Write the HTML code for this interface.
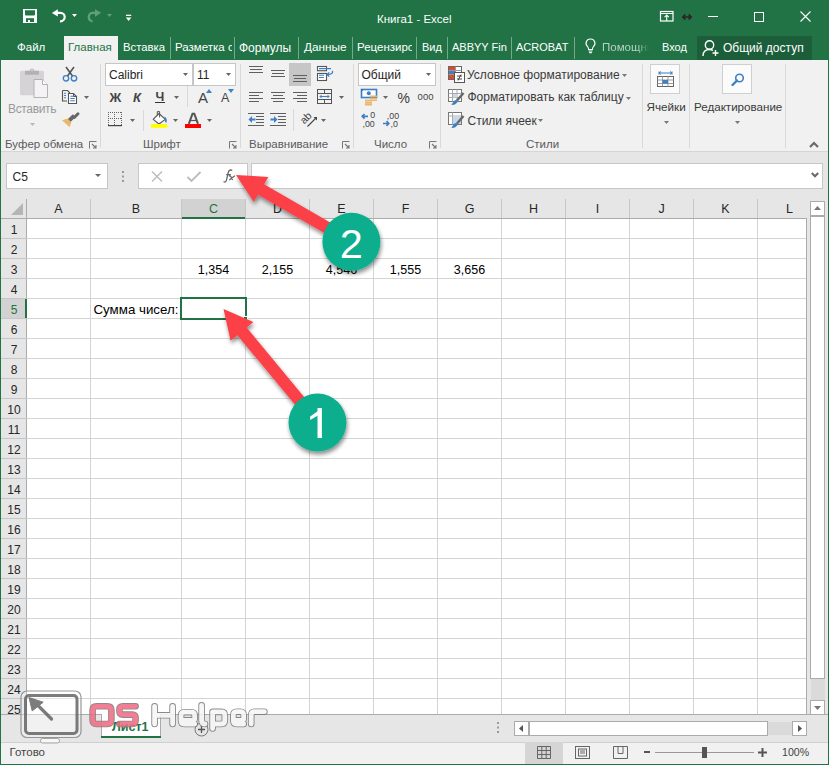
<!DOCTYPE html>
<html><head><meta charset="utf-8"><style>
*{margin:0;padding:0;box-sizing:border-box}
html,body{width:829px;height:765px;overflow:hidden;background:#fff;font-family:"Liberation Sans",sans-serif}
body{position:relative}
.a{position:absolute}
.t{position:absolute;white-space:nowrap;line-height:1}
svg{position:absolute;overflow:visible}
</style></head><body>
<div class="a" style="left:0px;top:0px;width:829px;height:60px;background:#217346;"></div>
<div class="t" style="left:377px;top:14.27px;font-size:11.5px;color:#fff;">Книга1 - Excel</div>
<svg style="left:22px;top:8px" width="16" height="16" viewBox="0 0 16 16"><rect x="1" y="1" width="14" height="14" fill="#fff"/><path d="M3 2.2H13V6.6L12.2 7.6H3.8L3 6.6Z" fill="#217346"/><rect x="4" y="10.2" width="8" height="3.8" fill="#217346"/><rect x="6" y="12" width="2" height="2" fill="#fff"/></svg>
<svg style="left:48px;top:6px" width="20" height="18" viewBox="0 0 20 18"><path d="M3.9 6.9L9.8 3.2V10.5Z" fill="#fff"/><path d="M9 6.9H12.5A4.2 4.2 0 0 1 12.5 15.3H12" fill="none" stroke="#fff" stroke-width="2.2"/></svg>
<svg style="left:72px;top:14px" width="5" height="3" viewBox="0 0 5 3"><path d="M0 0H5L2.5 3Z" fill="#fff"/></svg>
<svg style="left:84px;top:6px" width="20" height="18" viewBox="0 0 20 18"><path d="M17.2 6.8L11 3.2V10.7Z" fill="#5f9f7b"/><path d="M12 6.8H8A4.4 4.4 0 0 0 8 15.3H8.5" fill="none" stroke="#5f9f7b" stroke-width="2.2"/></svg>
<svg style="left:107px;top:14px" width="5" height="3" viewBox="0 0 5 3"><path d="M0 0H5L2.5 3Z" fill="#5f9f7b"/></svg>
<svg style="left:125px;top:14px" width="7" height="8" viewBox="0 0 7 8"><rect x="1" y="0.7" width="5.2" height="1.3" fill="#fff"/><path d="M0.8 3.4H6.4L3.6 7Z" fill="#fff"/></svg>
<svg style="left:659px;top:10px" width="15" height="12" viewBox="0 0 15 12"><rect x="1.5" y="1.5" width="12.5" height="9.5" fill="none" stroke="#fff" stroke-width="1.2"/><path d="M1.5 3.5H14" stroke="#fff" stroke-width="1"/><path d="M7.7 11V5M5.6 7.2L7.7 5.1L9.8 7.2" fill="none" stroke="#fff" stroke-width="1.1"/></svg>
<svg style="left:681px;top:13px" width="12" height="8" viewBox="0 0 12 8"><path d="M2 4H10" stroke="#2a2a2a" stroke-width="1.6"/><path d="M4 1L1 4L4 7ZM8 1L11 4L8 7Z" fill="#2a2a2a" stroke="#2a2a2a" stroke-width="1"/></svg>
<div class="a" style="left:708px;top:16px;width:10px;height:1px;background:#fff;"></div>
<div class="a" style="left:754px;top:12px;width:10px;height:10px;background:transparent;border:1px solid #fff"></div>
<svg style="left:800px;top:11px" width="11" height="11" viewBox="0 0 11 11"><path d="M0.5 0.5L10.5 10.5M10.5 0.5L0.5 10.5" stroke="#fff" stroke-width="1.1"/></svg>
<div class="a" style="left:64px;top:36px;width:54px;height:24px;background:#f1f1f1;"></div>
<div class="t" style="left:68px;top:41.97px;font-size:11.5px;color:#217346;">Главная</div>
<div class="t" style="left:17px;top:41.97px;font-size:11.5px;color:#fff;">Файл</div>
<div class="t" style="left:123px;top:42.13px;font-size:11.3px;color:#fff;">Вставка</div>
<div class="t" style="left:175px;top:41.97px;font-size:11.5px;color:#fff;width:57px;overflow:hidden">Разметка страницы</div>
<div class="t" style="left:239px;top:41.54px;font-size:12px;color:#fff;">Формулы</div>
<div class="t" style="left:304px;top:41.71px;font-size:11.8px;color:#fff;">Данные</div>
<div class="t" style="left:357px;top:41.97px;font-size:11.5px;color:#fff;width:55px;overflow:hidden">Рецензирование</div>
<div class="t" style="left:422px;top:42.39px;font-size:11px;color:#fff;">Вид</div>
<div class="t" style="left:452px;top:42.39px;font-size:11px;color:#fff;width:55px;overflow:hidden">ABBYY FineReader</div>
<div class="t" style="left:516px;top:42.39px;font-size:11px;color:#fff;">ACROBAT</div>
<div class="a" style="left:170px;top:37px;width:1px;height:22px;background:#78a88c;"></div>
<div class="a" style="left:234px;top:37px;width:1px;height:22px;background:#78a88c;"></div>
<div class="a" style="left:298px;top:37px;width:1px;height:22px;background:#78a88c;"></div>
<div class="a" style="left:352px;top:37px;width:1px;height:22px;background:#78a88c;"></div>
<div class="a" style="left:416px;top:37px;width:1px;height:22px;background:#78a88c;"></div>
<div class="a" style="left:447px;top:37px;width:1px;height:22px;background:#78a88c;"></div>
<div class="a" style="left:511px;top:37px;width:1px;height:22px;background:#78a88c;"></div>
<div class="a" style="left:574px;top:37px;width:1px;height:22px;background:#78a88c;"></div>
<svg style="left:585px;top:38px" width="11" height="17" viewBox="0 0 11 17"><path d="M5.5 1A4.3 4.3 0 0 0 2.6 8.6C3.4 9.5 3.6 10.5 3.6 11.5H7.4C7.4 10.5 7.6 9.5 8.4 8.6A4.3 4.3 0 0 0 5.5 1Z" fill="none" stroke="#fff" stroke-width="1.1"/><path d="M3.6 13H7.4M4.2 14.6H6.8" stroke="#fff" stroke-width="1.1"/></svg>
<div class="t" style="left:602px;top:41.97px;font-size:11.5px;color:#b5d3c2;width:47px;overflow:hidden;-webkit-mask-image:linear-gradient(90deg,#000 75%,transparent 100%)">Помощник</div>
<div class="t" style="left:662px;top:42.39px;font-size:11px;color:#fff;">Вход</div>
<div class="a" style="left:697px;top:36px;width:115px;height:24px;background:#1c5e3a;"></div>
<svg style="left:702px;top:39px" width="18" height="18" viewBox="0 0 18 18"><circle cx="7.5" cy="6" r="4.2" fill="none" stroke="#fff" stroke-width="1.4"/><path d="M1 17C1 12.5 3.5 10.5 7.5 10.5C9 10.5 10 10.8 11 11.3" fill="none" stroke="#fff" stroke-width="1.4"/><path d="M13.5 11V17M10.5 14H16.5" stroke="#fff" stroke-width="1.4"/></svg>
<div class="t" style="left:723px;top:41.54px;font-size:12px;color:#fff;">Общий доступ</div>
<div class="a" style="left:1px;top:60px;width:827px;height:91px;background:#f1f1f1;"></div>
<div class="a" style="left:1px;top:151px;width:827px;height:1px;background:#d5d5d5;"></div>
<div class="a" style="left:100px;top:64px;width:1px;height:84px;background:#d9d9d9;"></div>
<div class="a" style="left:240px;top:64px;width:1px;height:84px;background:#d9d9d9;"></div>
<div class="a" style="left:353px;top:64px;width:1px;height:84px;background:#d9d9d9;"></div>
<div class="a" style="left:440px;top:64px;width:1px;height:84px;background:#d9d9d9;"></div>
<div class="a" style="left:642px;top:64px;width:1px;height:84px;background:#d9d9d9;"></div>
<div class="a" style="left:689px;top:64px;width:1px;height:84px;background:#d9d9d9;"></div>
<div class="a" style="left:785px;top:64px;width:1px;height:84px;background:#d9d9d9;"></div>
<div class="t" style="left:5px;top:139.07px;font-size:11.5px;color:#5b5b5b;">Буфер обмена</div>
<div class="t" style="left:143px;top:139.07px;font-size:11.5px;color:#5b5b5b;">Шрифт</div>
<div class="t" style="left:249px;top:139.07px;font-size:11.5px;color:#5b5b5b;">Выравнивание</div>
<div class="t" style="left:374px;top:138.87px;font-size:11.5px;color:#5b5b5b;">Число</div>
<div class="t" style="left:526px;top:138.87px;font-size:11.5px;color:#5b5b5b;">Стили</div>
<svg style="left:89px;top:141px" width="8" height="8" viewBox="0 0 8 8"><path d="M0.5 7.5V0.5H7.5" fill="none" stroke="#777" stroke-width="1"/><path d="M3 3L7 7M4 7H7V4" fill="none" stroke="#777" stroke-width="1.1"/></svg>
<svg style="left:229px;top:141px" width="8" height="8" viewBox="0 0 8 8"><path d="M0.5 7.5V0.5H7.5" fill="none" stroke="#777" stroke-width="1"/><path d="M3 3L7 7M4 7H7V4" fill="none" stroke="#777" stroke-width="1.1"/></svg>
<svg style="left:342px;top:141px" width="8" height="8" viewBox="0 0 8 8"><path d="M0.5 7.5V0.5H7.5" fill="none" stroke="#777" stroke-width="1"/><path d="M3 3L7 7M4 7H7V4" fill="none" stroke="#777" stroke-width="1.1"/></svg>
<svg style="left:429px;top:141px" width="8" height="8" viewBox="0 0 8 8"><path d="M0.5 7.5V0.5H7.5" fill="none" stroke="#777" stroke-width="1"/><path d="M3 3L7 7M4 7H7V4" fill="none" stroke="#777" stroke-width="1.1"/></svg>
<svg style="left:809px;top:141px" width="10" height="7" viewBox="0 0 10 7"><path d="M1 6L5 2L9 6" fill="none" stroke="#6a6a6a" stroke-width="2.2"/></svg>
<svg style="left:19px;top:66px" width="30" height="33" viewBox="0 0 30 33"><rect x="1" y="4.8" width="24" height="24.5" rx="1.5" fill="#d6d3d7"/><path d="M6 4.8H11.3A1.9 1.9 0 0 1 14.7 4.8H20V8.8H6Z" fill="#b3b1b4"/><circle cx="13" cy="4.3" r="1.9" fill="#b3b1b4"/><circle cx="13" cy="4.3" r="0.8" fill="#f1f1f1"/><path d="M15 13.5H23.5L28.5 18.5V31.5H15Z" fill="#f4f2f5" stroke="#b3b1b4" stroke-width="1"/><path d="M23.5 13.5V18.5H28.5" fill="#fff" stroke="#b3b1b4" stroke-width="1"/></svg>
<div class="t" style="left:8px;top:103.04px;font-size:12px;color:#9a9a9a;letter-spacing:-0.35px">Вставить</div>
<svg style="left:30px;top:123px" width="5" height="3" viewBox="0 0 5 3"><path d="M0 0H5L2.5 3Z" fill="#b8b8b8"/></svg>
<svg style="left:62px;top:66px" width="16" height="16" viewBox="0 0 16 16"><path d="M4 1L10.5 10M12 1L5.5 10" stroke="#555" stroke-width="1.6"/><circle cx="4" cy="12.3" r="2.7" fill="none" stroke="#3f7fc4" stroke-width="1.4"/><circle cx="12" cy="12.3" r="2.7" fill="none" stroke="#3f7fc4" stroke-width="1.4"/></svg>
<svg style="left:61px;top:89px" width="18" height="16" viewBox="0 0 18 16"><path d="M1.5 1.5H6.5L8.5 3.5V4.5M1.5 1.5V12H6" fill="none" stroke="#555" stroke-width="1.1"/><path d="M3 4.3H5M3 6.5H5M3 8.7H5" stroke="#3f7fc4" stroke-width="1.1"/><path d="M7.5 4.5H12.5L15.5 7.5V14.5H7.5Z" fill="#fff" stroke="#555" stroke-width="1.1"/><path d="M12.5 4.5V7.5H15.5" fill="none" stroke="#555" stroke-width="1"/><path d="M9.3 7.3H12.3M9.3 9.5H13.8M9.3 11.7H13.8" stroke="#3f7fc4" stroke-width="1.1"/></svg>
<svg style="left:84px;top:96px" width="5" height="3" viewBox="0 0 5 3"><path d="M0 0H5L2.5 3Z" fill="#666"/></svg>
<svg style="left:61px;top:111px" width="19" height="17" viewBox="0 0 19 17"><path d="M17 2.8L13.5 6.3" stroke="#666" stroke-width="3" stroke-linecap="round"/><path d="M14.6 6L9 11.6L6.2 8.8L11.8 3.2Z" fill="#666"/><path d="M1 9.2L6.6 7.6L10.3 11.3L8.7 16.2Z" fill="#e8b96b"/></svg>
<div class="a" style="left:105px;top:63px;width:88px;height:23px;background:#fff;border:1px solid #c6c6c6"></div>
<div class="a" style="left:193px;top:63px;width:43px;height:23px;background:#fff;border:1px solid #c6c6c6"></div>
<div class="t" style="left:109px;top:68.84px;font-size:12px;color:#262626;">Calibri</div>
<div class="t" style="left:197px;top:68.84px;font-size:12px;color:#262626;">11</div>
<svg style="left:183px;top:73px" width="5" height="3" viewBox="0 0 5 3"><path d="M0 0H5L2.5 3Z" fill="#666"/></svg>
<svg style="left:226px;top:73px" width="5" height="3" viewBox="0 0 5 3"><path d="M0 0H5L2.5 3Z" fill="#666"/></svg>
<div class="t" style="left:109.5px;top:90.50px;font-size:13px;color:#444;font-weight:bold">Ж</div>
<div class="t" style="left:133px;top:90.50px;font-size:13px;color:#444;font-weight:bold;font-style:italic">К</div>
<div class="t" style="left:155.5px;top:90.92px;font-size:12.5px;color:#444;font-weight:bold">Ч</div>
<div class="a" style="left:155px;top:102px;width:10px;height:1px;background:#333;"></div>
<svg style="left:174px;top:96px" width="5" height="3" viewBox="0 0 5 3"><path d="M0 0H5L2.5 3Z" fill="#666"/></svg>
<div class="a" style="left:187px;top:86px;width:1px;height:21px;background:#d9d9d9;"></div>
<div class="t" style="left:198px;top:90.30px;font-size:15px;color:#444;">A</div>
<svg style="left:206px;top:89px" width="6" height="4" viewBox="0 0 6 4"><path d="M0 4H6L3 0Z" fill="#3f7fc4"/></svg>
<div class="t" style="left:221px;top:92.42px;font-size:12.5px;color:#444;">A</div>
<svg style="left:228px;top:89px" width="6" height="4" viewBox="0 0 6 4"><path d="M0 0H6L3 4Z" fill="#3f7fc4"/></svg>
<svg style="left:108px;top:112px" width="14" height="14" viewBox="0 0 14 14"><rect x="0" y="0" width="1" height="1" fill="#666"/><rect x="0" y="0" width="1" height="1" fill="#666"/><rect x="13" y="0" width="1" height="1" fill="#666"/><rect x="0" y="6" width="1" height="1" fill="#666"/><rect x="6" y="0" width="1" height="1" fill="#666"/><rect x="2" y="0" width="1" height="1" fill="#666"/><rect x="0" y="2" width="1" height="1" fill="#666"/><rect x="13" y="2" width="1" height="1" fill="#666"/><rect x="2" y="6" width="1" height="1" fill="#666"/><rect x="6" y="2" width="1" height="1" fill="#666"/><rect x="4" y="0" width="1" height="1" fill="#666"/><rect x="0" y="4" width="1" height="1" fill="#666"/><rect x="13" y="4" width="1" height="1" fill="#666"/><rect x="4" y="6" width="1" height="1" fill="#666"/><rect x="6" y="4" width="1" height="1" fill="#666"/><rect x="6" y="0" width="1" height="1" fill="#666"/><rect x="0" y="6" width="1" height="1" fill="#666"/><rect x="13" y="6" width="1" height="1" fill="#666"/><rect x="6" y="6" width="1" height="1" fill="#666"/><rect x="6" y="6" width="1" height="1" fill="#666"/><rect x="8" y="0" width="1" height="1" fill="#666"/><rect x="0" y="8" width="1" height="1" fill="#666"/><rect x="13" y="8" width="1" height="1" fill="#666"/><rect x="8" y="6" width="1" height="1" fill="#666"/><rect x="6" y="8" width="1" height="1" fill="#666"/><rect x="10" y="0" width="1" height="1" fill="#666"/><rect x="0" y="10" width="1" height="1" fill="#666"/><rect x="13" y="10" width="1" height="1" fill="#666"/><rect x="10" y="6" width="1" height="1" fill="#666"/><rect x="6" y="10" width="1" height="1" fill="#666"/><rect x="12" y="0" width="1" height="1" fill="#666"/><rect x="0" y="12" width="1" height="1" fill="#666"/><rect x="13" y="12" width="1" height="1" fill="#666"/><rect x="12" y="6" width="1" height="1" fill="#666"/><rect x="6" y="12" width="1" height="1" fill="#666"/><rect x="0" y="13" width="14" height="1.2" fill="#444"/></svg>
<svg style="left:130px;top:119px" width="5" height="3" viewBox="0 0 5 3"><path d="M0 0H5L2.5 3Z" fill="#666"/></svg>
<div class="a" style="left:143px;top:110px;width:1px;height:21px;background:#d9d9d9;"></div>
<svg style="left:150px;top:110px" width="18" height="19" viewBox="0 0 18 19"><path d="M3.2 9.4L9 3.5L15.3 9.4L9 14Z" fill="#fff" stroke="#555" stroke-width="1.1" stroke-linejoin="round"/><path d="M7.3 5.2V1.6H9.6V7.5" fill="none" stroke="#555" stroke-width="1"/><path d="M14.2 6.5C16.8 7.5 17.4 10 16.3 13.3L15 11.2Z" fill="#3f7fc4"/><rect x="1" y="14" width="16.2" height="3.8" fill="#ffff00"/></svg>
<svg style="left:173px;top:119px" width="5" height="3" viewBox="0 0 5 3"><path d="M0 0H5L2.5 3Z" fill="#666"/></svg>
<svg style="left:185px;top:113px" width="17" height="11" viewBox="0 0 17 11"><path d="M3.8 10.8L7.5 0.8H9.3L13 10.8" fill="none" stroke="#555" stroke-width="2"/><path d="M5.6 7.5H11.2" stroke="#555" stroke-width="1.2"/></svg>
<div class="a" style="left:185px;top:124px;width:16px;height:4px;background:#ff0000;"></div>
<svg style="left:207px;top:119px" width="5" height="3" viewBox="0 0 5 3"><path d="M0 0H5L2.5 3Z" fill="#666"/></svg>
<div class="a" style="left:289px;top:63px;width:22px;height:23px;background:#c6c6c6;"></div>
<div class="a" style="left:249px;top:66px;width:14px;height:1px;background:#5f5f5f;"></div>
<div class="a" style="left:250px;top:69px;width:12px;height:1px;background:#5f5f5f;"></div>
<div class="a" style="left:249px;top:72px;width:14px;height:1px;background:#5f5f5f;"></div>
<div class="a" style="left:271px;top:70px;width:14px;height:1px;background:#5f5f5f;"></div>
<div class="a" style="left:272px;top:73px;width:12px;height:1px;background:#5f5f5f;"></div>
<div class="a" style="left:271px;top:76px;width:14px;height:1px;background:#5f5f5f;"></div>
<div class="a" style="left:293px;top:75px;width:14px;height:1px;background:#5f5f5f;"></div>
<div class="a" style="left:294px;top:78px;width:12px;height:1px;background:#5f5f5f;"></div>
<div class="a" style="left:293px;top:81px;width:14px;height:1px;background:#5f5f5f;"></div>
<svg style="left:316px;top:65px" width="18" height="17" viewBox="0 0 18 17"><rect x="1.5" y="1.5" width="9" height="4.2" fill="#fff" stroke="#555" stroke-width="1.1"/><rect x="1.5" y="8.5" width="9" height="7" fill="#fff" stroke="#555" stroke-width="1.1"/><path d="M3 3.6H15M3 10.2H8M3 12.5H8" stroke="#3f7fc4" stroke-width="1.1"/><path d="M16.5 5.8C17 8.2 15.5 9.5 11.5 9.6" fill="none" stroke="#3f7fc4" stroke-width="1.3"/><path d="M13.3 7.6L11 9.6L13.3 11.5" fill="none" stroke="#3f7fc4" stroke-width="1.3"/></svg>
<div class="a" style="left:249px;top:92px;width:14px;height:1px;background:#5f5f5f;"></div>
<div class="a" style="left:271px;top:92px;width:14px;height:1px;background:#5f5f5f;"></div>
<div class="a" style="left:293px;top:92px;width:14px;height:1px;background:#5f5f5f;"></div>
<div class="a" style="left:249px;top:98px;width:14px;height:1px;background:#5f5f5f;"></div>
<div class="a" style="left:271px;top:98px;width:14px;height:1px;background:#5f5f5f;"></div>
<div class="a" style="left:293px;top:98px;width:14px;height:1px;background:#5f5f5f;"></div>
<div class="a" style="left:249px;top:95px;width:10px;height:1px;background:#5f5f5f;"></div>
<div class="a" style="left:273px;top:95px;width:10px;height:1px;background:#5f5f5f;"></div>
<div class="a" style="left:297px;top:95px;width:10px;height:1px;background:#5f5f5f;"></div>
<div class="a" style="left:249px;top:101px;width:10px;height:1px;background:#5f5f5f;"></div>
<div class="a" style="left:273px;top:101px;width:10px;height:1px;background:#5f5f5f;"></div>
<div class="a" style="left:297px;top:101px;width:10px;height:1px;background:#5f5f5f;"></div>
<svg style="left:317px;top:89px" width="15" height="15" viewBox="0 0 15 15"><rect x="0.5" y="0.5" width="14" height="14" fill="none" stroke="#555" stroke-width="1"/><path d="M0.5 4.5H14.5M0.5 10.5H14.5M7.5 0.5V4.5M7.5 10.5V14.5" stroke="#555" stroke-width="1"/><path d="M3 7.5H12M4.5 6L3 7.5L4.5 9M10.5 6L12 7.5L10.5 9" fill="none" stroke="#3f7fc4" stroke-width="1"/></svg>
<svg style="left:339px;top:96px" width="5" height="3" viewBox="0 0 5 3"><path d="M0 0H5L2.5 3Z" fill="#666"/></svg>
<div class="a" style="left:248px;top:113px;width:16px;height:1px;background:#5f5f5f;"></div>
<div class="a" style="left:248px;top:125px;width:16px;height:1px;background:#5f5f5f;"></div>
<div class="a" style="left:256px;top:116px;width:8px;height:1px;background:#5f5f5f;"></div>
<div class="a" style="left:256px;top:119px;width:8px;height:1px;background:#5f5f5f;"></div>
<div class="a" style="left:256px;top:122px;width:8px;height:1px;background:#5f5f5f;"></div>
<div class="a" style="left:270px;top:113px;width:16px;height:1px;background:#5f5f5f;"></div>
<div class="a" style="left:270px;top:125px;width:16px;height:1px;background:#5f5f5f;"></div>
<div class="a" style="left:278px;top:116px;width:8px;height:1px;background:#5f5f5f;"></div>
<div class="a" style="left:278px;top:119px;width:8px;height:1px;background:#5f5f5f;"></div>
<div class="a" style="left:278px;top:122px;width:8px;height:1px;background:#5f5f5f;"></div>
<svg style="left:248px;top:115px" width="8" height="9" viewBox="0 0 8 9"><path d="M7.5 4.5H2.5" stroke="#3f7fc4" stroke-width="2"/><path d="M4 1L0.5 4.5L4 8Z" fill="#3f7fc4"/></svg>
<svg style="left:270px;top:115px" width="8" height="9" viewBox="0 0 8 9"><path d="M0.5 4.5H5.5" stroke="#3f7fc4" stroke-width="2"/><path d="M4 1L7.5 4.5L4 8Z" fill="#3f7fc4"/></svg>
<div class="a" style="left:293px;top:109px;width:1px;height:22px;background:#d9d9d9;"></div>
<svg style="left:300px;top:111px" width="19" height="17" viewBox="0 0 19 17"><text x="0" y="0" font-size="10.5" font-family="Liberation Sans" fill="#444" transform="translate(4.2 13.6) rotate(-45)">ab</text><path d="M7.5 15.5L16.5 6.5" stroke="#444" stroke-width="1.1"/><path d="M13.5 6H17V9.5Z" fill="#444"/></svg>
<svg style="left:321px;top:119px" width="5" height="3" viewBox="0 0 5 3"><path d="M0 0H5L2.5 3Z" fill="#666"/></svg>
<div class="a" style="left:358px;top:63px;width:78px;height:23px;background:#fff;border:1px solid #c6c6c6"></div>
<div class="t" style="left:361.5px;top:69.14px;font-size:12px;color:#262626;">Общий</div>
<svg style="left:426px;top:73px" width="5" height="3" viewBox="0 0 5 3"><path d="M0 0H5L2.5 3Z" fill="#666"/></svg>
<svg style="left:360px;top:88px" width="18" height="18" viewBox="0 0 18 18"><rect x="1.5" y="1.5" width="15" height="8" fill="#fff" stroke="#3f7fc4" stroke-width="1.6"/><path d="M1 1H4L1 4ZM17 10H14L17 7Z" fill="#2e6db4"/><circle cx="8.8" cy="5.2" r="2" fill="#3f7fc4"/><path d="M10 8.2H17M10 10.3H17M10 12.3H17" stroke="#e9b56b" stroke-width="1.6"/><path d="M5 12.5H12M5 14.6H12M5 16.6H12" stroke="#e9b56b" stroke-width="1.6"/></svg>
<svg style="left:383px;top:96px" width="5" height="3" viewBox="0 0 5 3"><path d="M0 0H5L2.5 3Z" fill="#666"/></svg>
<div class="t" style="left:397.5px;top:91.15px;font-size:14px;color:#3a3a3a;">%</div>
<div class="t" style="left:417.5px;top:91.96px;font-size:9.5px;color:#444;letter-spacing:0.1px">000</div>
<svg style="left:360px;top:112px" width="18" height="16" viewBox="0 0 18 16"><text x="10.2" y="6.3" font-size="8.8" font-family="Liberation Sans" fill="#444">0</text><text x="2.5" y="14.6" font-size="8.8" font-family="Liberation Sans" fill="#444">,00</text><path d="M8 4.3H2.5M4.5 2L2.2 4.3L4.5 6.6" fill="none" stroke="#3f7fc4" stroke-width="1.7"/></svg>
<svg style="left:382px;top:112px" width="18" height="16" viewBox="0 0 18 16"><text x="4.8" y="7.3" font-size="8.8" font-family="Liberation Sans" fill="#444">,00</text><text x="8.6" y="14.6" font-size="8.8" font-family="Liberation Sans" fill="#444">,0</text><path d="M1 11.5H6.5M4.5 9.2L6.8 11.5L4.5 13.8" fill="none" stroke="#3f7fc4" stroke-width="1.7"/></svg>
<svg style="left:448px;top:66px" width="17" height="17" viewBox="0 0 17 17"><rect x="0.5" y="0.5" width="13" height="13" fill="#fff" stroke="#666" stroke-width="1"/><rect x="1" y="1" width="6" height="3" fill="#e0492c"/><rect x="1" y="5" width="6" height="3" fill="#3f7fc4"/><rect x="1" y="9" width="6" height="4" fill="#e0492c"/><path d="M7.5 0.5V13.5M0.5 4.5H13.5M0.5 8.5H13.5" stroke="#999" stroke-width="1"/><rect x="6.5" y="6.5" width="10" height="10" fill="#fff" stroke="#555" stroke-width="1"/><path d="M9 10H14M9 13H14M13 8.5L10 14.5" stroke="#444" stroke-width="1"/></svg>
<div class="t" style="left:467px;top:69.14px;font-size:12px;color:#3a3a3a;">Условное форматирование</div>
<svg style="left:622px;top:74px" width="5" height="3" viewBox="0 0 5 3"><path d="M0 0H5L2.5 3Z" fill="#777"/></svg>
<svg style="left:448px;top:89px" width="17" height="17" viewBox="0 0 17 17"><rect x="0.5" y="0.5" width="13" height="12" fill="#fff" stroke="#777" stroke-width="1"/><path d="M0.5 4.5H13.5M0.5 8.5H13.5M4.5 0.5V12.5M9 0.5V12.5" stroke="#aaa" stroke-width="1"/><rect x="5" y="5" width="4" height="3.5" fill="#c5d8ee"/><path d="M15.5 4L9 11.5" stroke="#666" stroke-width="2.4"/><path d="M8.5 11C6 11 5 13 3.5 16C6.5 16 9.5 14.5 9.5 12Z" fill="#3f7fc4"/></svg>
<div class="t" style="left:467.5px;top:91.44px;font-size:12px;color:#3a3a3a;">Форматировать как таблицу</div>
<svg style="left:626px;top:97px" width="5" height="3" viewBox="0 0 5 3"><path d="M0 0H5L2.5 3Z" fill="#777"/></svg>
<svg style="left:448px;top:112px" width="17" height="17" viewBox="0 0 17 17"><rect x="0.5" y="0.5" width="13" height="12" fill="#fff" stroke="#777" stroke-width="1"/><path d="M0.5 4H13.5M4.5 0.5V12.5" stroke="#aaa" stroke-width="1"/><rect x="5" y="4.5" width="8" height="7.5" fill="#c5d8ee"/><path d="M15.5 4L9 11.5" stroke="#666" stroke-width="2.4"/><path d="M8.5 11C6 11 5 13 3.5 16C6.5 16 9.5 14.5 9.5 12Z" fill="#3f7fc4"/></svg>
<div class="t" style="left:467.5px;top:114.64px;font-size:12px;color:#3a3a3a;">Стили ячеек</div>
<svg style="left:538px;top:119px" width="5" height="3" viewBox="0 0 5 3"><path d="M0 0H5L2.5 3Z" fill="#777"/></svg>
<div class="a" style="left:650px;top:64px;width:30px;height:30px;background:#fbfbfb;border:1px solid #cfcfcf"></div>
<svg style="left:657px;top:70px" width="17" height="17" viewBox="0 0 17 17"><path d="M2 1.5V4.5M15 1.5V4.5M2 3H15M4 1.5L2 3L4 4.5M13 1.5L15 3L13 4.5" fill="none" stroke="#3f7fc4" stroke-width="1"/><rect x="0.5" y="6.5" width="16" height="10" fill="#fff" stroke="#666" stroke-width="1"/><path d="M0.5 10H16.5M0.5 13.5H16.5M5.5 6.5V16.5M11 6.5V16.5" stroke="#999" stroke-width="1"/><rect x="5.5" y="10" width="5.5" height="3.5" fill="#3f7fc4"/></svg>
<div class="t" style="left:646.5px;top:101.10px;font-size:11.7px;color:#3a3a3a;">Ячейки</div>
<svg style="left:664px;top:121px" width="5" height="3" viewBox="0 0 5 3"><path d="M0 0H5L2.5 3Z" fill="#777"/></svg>
<div class="a" style="left:722px;top:64px;width:30px;height:30px;background:#fbfbfb;border:1px solid #cfcfcf"></div>
<svg style="left:731px;top:73px" width="14" height="13" viewBox="0 0 14 13"><circle cx="8.5" cy="5" r="3.8" fill="none" stroke="#3f7fc4" stroke-width="1.6"/><path d="M6 7.5L1.5 12" stroke="#3f7fc4" stroke-width="2.4" stroke-linecap="round"/></svg>
<div class="t" style="left:694px;top:101.18px;font-size:11.6px;color:#3a3a3a;">Редактирование</div>
<svg style="left:735px;top:121px" width="5" height="3" viewBox="0 0 5 3"><path d="M0 0H5L2.5 3Z" fill="#777"/></svg>
<div class="a" style="left:1px;top:152px;width:827px;height:47px;background:#e6e6e6;"></div>
<div class="a" style="left:6px;top:163px;width:102px;height:26px;background:#fff;border:1px solid #c6c6c6"></div>
<div class="t" style="left:12.5px;top:171.34px;font-size:12px;color:#262626;">C5</div>
<svg style="left:94.5px;top:174px" width="6" height="3" viewBox="0 0 6 3"><path d="M0 0H6L3.0 3Z" fill="#666"/></svg>
<svg style="left:122px;top:171px" width="3" height="11" viewBox="0 0 3 11"><rect x="0" y="0" width="2" height="2" fill="#999"/><rect x="0" y="4.5" width="2" height="2" fill="#999"/><rect x="0" y="9" width="2" height="2" fill="#999"/></svg>
<div class="a" style="left:138px;top:163px;width:110px;height:26px;background:#fff;border:1px solid #c6c6c6"></div>
<svg style="left:151px;top:171px" width="12" height="11" viewBox="0 0 12 11"><path d="M1 0.5L11 10.5M11 0.5L1 10.5" stroke="#bbb" stroke-width="1.4"/></svg>
<svg style="left:187px;top:171px" width="14" height="11" viewBox="0 0 14 11"><path d="M0.5 6L4.5 10L13.5 1" fill="none" stroke="#bbb" stroke-width="1.8"/></svg>
<svg style="left:220px;top:166px" width="18" height="18" viewBox="0 0 18 18"><path d="M12.2 4.6C10.6 3.4 8.9 4 8.3 6.4L6.3 14.6C5.8 16.2 4.6 16.4 3.6 15.6M6.2 8.6H10.8" fill="none" stroke="#666" stroke-width="1.3"/><path d="M8.8 9.8C10 9.6 10.8 10.2 11.4 11.5L12.8 13.8M14.8 9.8L9.3 14" fill="none" stroke="#666" stroke-width="1.3"/></svg>
<div class="a" style="left:251px;top:163px;width:572px;height:26px;background:#fff;border:1px solid #c6c6c6"></div>
<svg style="left:811px;top:172px" width="8" height="6" viewBox="0 0 8 6"><path d="M0.8 1L4 4.2L7.2 1" fill="none" stroke="#6a6a6a" stroke-width="2.1"/></svg>
<div class="a" style="left:1px;top:199px;width:806px;height:20px;background:#e6e6e6;"></div>
<div class="a" style="left:1px;top:219px;width:26px;height:495px;background:#e6e6e6;"></div>
<svg style="left:11px;top:203px" width="12" height="12" viewBox="0 0 12 12"><path d="M12 0V12H0Z" fill="#b5b5b5"/></svg>
<div class="a" style="left:182px;top:199px;width:63px;height:19px;background:#d2d2d2;"></div>
<div class="a" style="left:1px;top:299px;width:25px;height:19px;background:#d2d2d2;"></div>
<div class="a" style="left:90px;top:199px;width:1px;height:19px;background:#c6c6c6;"></div>
<div class="t" style="left:-41.5px;width:200px;text-align:center;top:203.42px;font-size:12.5px;color:#262626;">A</div>
<div class="a" style="left:181px;top:199px;width:1px;height:19px;background:#c6c6c6;"></div>
<div class="t" style="left:36.0px;width:200px;text-align:center;top:203.42px;font-size:12.5px;color:#262626;">B</div>
<div class="a" style="left:245px;top:199px;width:1px;height:19px;background:#c6c6c6;"></div>
<div class="t" style="left:113.5px;width:200px;text-align:center;top:203.42px;font-size:12.5px;color:#217346;">C</div>
<div class="a" style="left:309px;top:199px;width:1px;height:19px;background:#c6c6c6;"></div>
<div class="t" style="left:177.5px;width:200px;text-align:center;top:203.42px;font-size:12.5px;color:#262626;">D</div>
<div class="a" style="left:373px;top:199px;width:1px;height:19px;background:#c6c6c6;"></div>
<div class="t" style="left:241.5px;width:200px;text-align:center;top:203.42px;font-size:12.5px;color:#262626;">E</div>
<div class="a" style="left:437px;top:199px;width:1px;height:19px;background:#c6c6c6;"></div>
<div class="t" style="left:305.5px;width:200px;text-align:center;top:203.42px;font-size:12.5px;color:#262626;">F</div>
<div class="a" style="left:501px;top:199px;width:1px;height:19px;background:#c6c6c6;"></div>
<div class="t" style="left:369.5px;width:200px;text-align:center;top:203.42px;font-size:12.5px;color:#262626;">G</div>
<div class="a" style="left:565px;top:199px;width:1px;height:19px;background:#c6c6c6;"></div>
<div class="t" style="left:433.5px;width:200px;text-align:center;top:203.42px;font-size:12.5px;color:#262626;">H</div>
<div class="a" style="left:629px;top:199px;width:1px;height:19px;background:#c6c6c6;"></div>
<div class="t" style="left:497.5px;width:200px;text-align:center;top:203.42px;font-size:12.5px;color:#262626;">I</div>
<div class="a" style="left:693px;top:199px;width:1px;height:19px;background:#c6c6c6;"></div>
<div class="t" style="left:561.5px;width:200px;text-align:center;top:203.42px;font-size:12.5px;color:#262626;">J</div>
<div class="a" style="left:757px;top:199px;width:1px;height:19px;background:#c6c6c6;"></div>
<div class="t" style="left:625.5px;width:200px;text-align:center;top:203.42px;font-size:12.5px;color:#262626;">K</div>
<div class="t" style="left:689.5px;width:200px;text-align:center;top:203.42px;font-size:12.5px;color:#262626;">L</div>
<div class="a" style="left:1px;top:218px;width:806px;height:1px;background:#ababab;"></div>
<div class="a" style="left:182px;top:217px;width:63px;height:2px;background:#217346;"></div>
<div class="a" style="left:26px;top:199px;width:1px;height:515px;background:#ababab;"></div>
<div class="a" style="left:25px;top:299px;width:2px;height:19px;background:#217346;"></div>
<div class="a" style="left:1px;top:238px;width:26px;height:1px;background:#c6c6c6;"></div>
<div class="a" style="left:27px;top:238px;width:779px;height:1px;background:#d4d4d4;"></div>
<div class="t" style="left:-86px;width:200px;text-align:center;top:224.14px;font-size:12px;color:#262626;">1</div>
<div class="a" style="left:1px;top:258px;width:26px;height:1px;background:#c6c6c6;"></div>
<div class="a" style="left:27px;top:258px;width:779px;height:1px;background:#d4d4d4;"></div>
<div class="t" style="left:-86px;width:200px;text-align:center;top:244.14px;font-size:12px;color:#262626;">2</div>
<div class="a" style="left:1px;top:278px;width:26px;height:1px;background:#c6c6c6;"></div>
<div class="a" style="left:27px;top:278px;width:779px;height:1px;background:#d4d4d4;"></div>
<div class="t" style="left:-86px;width:200px;text-align:center;top:264.14px;font-size:12px;color:#262626;">3</div>
<div class="a" style="left:1px;top:298px;width:26px;height:1px;background:#c6c6c6;"></div>
<div class="a" style="left:27px;top:298px;width:779px;height:1px;background:#d4d4d4;"></div>
<div class="t" style="left:-86px;width:200px;text-align:center;top:284.14px;font-size:12px;color:#262626;">4</div>
<div class="a" style="left:1px;top:318px;width:26px;height:1px;background:#c6c6c6;"></div>
<div class="a" style="left:27px;top:318px;width:779px;height:1px;background:#d4d4d4;"></div>
<div class="t" style="left:-86px;width:200px;text-align:center;top:304.14px;font-size:12px;color:#217346;">5</div>
<div class="a" style="left:1px;top:338px;width:26px;height:1px;background:#c6c6c6;"></div>
<div class="a" style="left:27px;top:338px;width:779px;height:1px;background:#d4d4d4;"></div>
<div class="t" style="left:-86px;width:200px;text-align:center;top:324.14px;font-size:12px;color:#262626;">6</div>
<div class="a" style="left:1px;top:358px;width:26px;height:1px;background:#c6c6c6;"></div>
<div class="a" style="left:27px;top:358px;width:779px;height:1px;background:#d4d4d4;"></div>
<div class="t" style="left:-86px;width:200px;text-align:center;top:344.14px;font-size:12px;color:#262626;">7</div>
<div class="a" style="left:1px;top:378px;width:26px;height:1px;background:#c6c6c6;"></div>
<div class="a" style="left:27px;top:378px;width:779px;height:1px;background:#d4d4d4;"></div>
<div class="t" style="left:-86px;width:200px;text-align:center;top:364.14px;font-size:12px;color:#262626;">8</div>
<div class="a" style="left:1px;top:398px;width:26px;height:1px;background:#c6c6c6;"></div>
<div class="a" style="left:27px;top:398px;width:779px;height:1px;background:#d4d4d4;"></div>
<div class="t" style="left:-86px;width:200px;text-align:center;top:384.14px;font-size:12px;color:#262626;">9</div>
<div class="a" style="left:1px;top:418px;width:26px;height:1px;background:#c6c6c6;"></div>
<div class="a" style="left:27px;top:418px;width:779px;height:1px;background:#d4d4d4;"></div>
<div class="t" style="left:-86px;width:200px;text-align:center;top:404.14px;font-size:12px;color:#262626;">10</div>
<div class="a" style="left:1px;top:438px;width:26px;height:1px;background:#c6c6c6;"></div>
<div class="a" style="left:27px;top:438px;width:779px;height:1px;background:#d4d4d4;"></div>
<div class="t" style="left:-86px;width:200px;text-align:center;top:424.14px;font-size:12px;color:#262626;">11</div>
<div class="a" style="left:1px;top:458px;width:26px;height:1px;background:#c6c6c6;"></div>
<div class="a" style="left:27px;top:458px;width:779px;height:1px;background:#d4d4d4;"></div>
<div class="t" style="left:-86px;width:200px;text-align:center;top:444.14px;font-size:12px;color:#262626;">12</div>
<div class="a" style="left:1px;top:478px;width:26px;height:1px;background:#c6c6c6;"></div>
<div class="a" style="left:27px;top:478px;width:779px;height:1px;background:#d4d4d4;"></div>
<div class="t" style="left:-86px;width:200px;text-align:center;top:464.14px;font-size:12px;color:#262626;">13</div>
<div class="a" style="left:1px;top:498px;width:26px;height:1px;background:#c6c6c6;"></div>
<div class="a" style="left:27px;top:498px;width:779px;height:1px;background:#d4d4d4;"></div>
<div class="t" style="left:-86px;width:200px;text-align:center;top:484.14px;font-size:12px;color:#262626;">14</div>
<div class="a" style="left:1px;top:518px;width:26px;height:1px;background:#c6c6c6;"></div>
<div class="a" style="left:27px;top:518px;width:779px;height:1px;background:#d4d4d4;"></div>
<div class="t" style="left:-86px;width:200px;text-align:center;top:504.14px;font-size:12px;color:#262626;">15</div>
<div class="a" style="left:1px;top:538px;width:26px;height:1px;background:#c6c6c6;"></div>
<div class="a" style="left:27px;top:538px;width:779px;height:1px;background:#d4d4d4;"></div>
<div class="t" style="left:-86px;width:200px;text-align:center;top:524.14px;font-size:12px;color:#262626;">16</div>
<div class="a" style="left:1px;top:558px;width:26px;height:1px;background:#c6c6c6;"></div>
<div class="a" style="left:27px;top:558px;width:779px;height:1px;background:#d4d4d4;"></div>
<div class="t" style="left:-86px;width:200px;text-align:center;top:544.14px;font-size:12px;color:#262626;">17</div>
<div class="a" style="left:1px;top:578px;width:26px;height:1px;background:#c6c6c6;"></div>
<div class="a" style="left:27px;top:578px;width:779px;height:1px;background:#d4d4d4;"></div>
<div class="t" style="left:-86px;width:200px;text-align:center;top:564.14px;font-size:12px;color:#262626;">18</div>
<div class="a" style="left:1px;top:598px;width:26px;height:1px;background:#c6c6c6;"></div>
<div class="a" style="left:27px;top:598px;width:779px;height:1px;background:#d4d4d4;"></div>
<div class="t" style="left:-86px;width:200px;text-align:center;top:584.14px;font-size:12px;color:#262626;">19</div>
<div class="a" style="left:1px;top:618px;width:26px;height:1px;background:#c6c6c6;"></div>
<div class="a" style="left:27px;top:618px;width:779px;height:1px;background:#d4d4d4;"></div>
<div class="t" style="left:-86px;width:200px;text-align:center;top:604.14px;font-size:12px;color:#262626;">20</div>
<div class="a" style="left:1px;top:638px;width:26px;height:1px;background:#c6c6c6;"></div>
<div class="a" style="left:27px;top:638px;width:779px;height:1px;background:#d4d4d4;"></div>
<div class="t" style="left:-86px;width:200px;text-align:center;top:624.14px;font-size:12px;color:#262626;">21</div>
<div class="a" style="left:1px;top:658px;width:26px;height:1px;background:#c6c6c6;"></div>
<div class="a" style="left:27px;top:658px;width:779px;height:1px;background:#d4d4d4;"></div>
<div class="t" style="left:-86px;width:200px;text-align:center;top:644.14px;font-size:12px;color:#262626;">22</div>
<div class="a" style="left:1px;top:678px;width:26px;height:1px;background:#c6c6c6;"></div>
<div class="a" style="left:27px;top:678px;width:779px;height:1px;background:#d4d4d4;"></div>
<div class="t" style="left:-86px;width:200px;text-align:center;top:664.14px;font-size:12px;color:#262626;">23</div>
<div class="a" style="left:1px;top:698px;width:26px;height:1px;background:#c6c6c6;"></div>
<div class="a" style="left:27px;top:698px;width:779px;height:1px;background:#d4d4d4;"></div>
<div class="t" style="left:-86px;width:200px;text-align:center;top:684.14px;font-size:12px;color:#262626;">24</div>
<div class="t" style="left:-86px;width:200px;text-align:center;top:704.14px;font-size:12px;color:#262626;">25</div>
<div class="a" style="left:90px;top:219px;width:1px;height:495px;background:#d4d4d4;"></div>
<div class="a" style="left:181px;top:219px;width:1px;height:495px;background:#d4d4d4;"></div>
<div class="a" style="left:245px;top:219px;width:1px;height:495px;background:#d4d4d4;"></div>
<div class="a" style="left:309px;top:219px;width:1px;height:495px;background:#d4d4d4;"></div>
<div class="a" style="left:373px;top:219px;width:1px;height:495px;background:#d4d4d4;"></div>
<div class="a" style="left:437px;top:219px;width:1px;height:495px;background:#d4d4d4;"></div>
<div class="a" style="left:501px;top:219px;width:1px;height:495px;background:#d4d4d4;"></div>
<div class="a" style="left:565px;top:219px;width:1px;height:495px;background:#d4d4d4;"></div>
<div class="a" style="left:629px;top:219px;width:1px;height:495px;background:#d4d4d4;"></div>
<div class="a" style="left:693px;top:219px;width:1px;height:495px;background:#d4d4d4;"></div>
<div class="a" style="left:757px;top:219px;width:1px;height:495px;background:#d4d4d4;"></div>
<div class="a" style="left:806px;top:218px;width:1px;height:496px;background:#ababab;"></div>
<div class="t" style="left:113.5px;width:200px;text-align:center;top:263.62px;font-size:12.5px;color:#000;">1,354</div>
<div class="t" style="left:177.5px;width:200px;text-align:center;top:263.62px;font-size:12.5px;color:#000;">2,155</div>
<div class="t" style="left:241.5px;width:200px;text-align:center;top:263.62px;font-size:12.5px;color:#000;">4,546</div>
<div class="t" style="left:305.5px;width:200px;text-align:center;top:263.62px;font-size:12.5px;color:#000;">1,555</div>
<div class="t" style="left:369.5px;width:200px;text-align:center;top:263.62px;font-size:12.5px;color:#000;">3,656</div>
<div class="t" style="left:93.5px;top:302.74px;font-size:13.3px;color:#000;">Сумма чисел:</div>
<div class="a" style="left:180px;top:297px;width:67px;height:23px;background:transparent;border:2px solid #217346"></div>
<div class="a" style="left:243px;top:316px;width:5px;height:5px;background:#217346;border:1px solid #fff"></div>
<div class="a" style="left:807px;top:199px;width:21px;height:515px;background:#e6e6e6;"></div>
<div class="a" style="left:810px;top:201px;width:15px;height:15px;background:#fff;border:1px solid #ababab"></div>
<svg style="left:814px;top:206px" width="7" height="4" viewBox="0 0 7 4"><path d="M0 4H7L3.5 0Z" fill="#777"/></svg>
<div class="a" style="left:810px;top:216px;width:15px;height:463px;background:#fff;border:1px solid #ababab"></div>
<div class="a" style="left:811px;top:679px;width:14px;height:21px;background:#dadada;"></div>
<div class="a" style="left:810px;top:700px;width:15px;height:15px;background:#fff;border:1px solid #ababab"></div>
<svg style="left:814px;top:706px" width="7" height="4" viewBox="0 0 7 4"><path d="M0 0H7L3.5 4Z" fill="#777"/></svg>
<div class="a" style="left:1px;top:714px;width:827px;height:28px;background:#e6e6e6;"></div>
<div class="a" style="left:1px;top:714px;width:827px;height:1px;background:#ababab;"></div>
<div class="a" style="left:101px;top:714px;width:60px;height:24px;background:#fff;border-left:1px solid #ababab;border-right:1px solid #ababab"></div>
<div class="a" style="left:101px;top:736px;width:60px;height:2px;background:#217346;"></div>
<div class="t" style="left:112px;top:721.42px;font-size:12.5px;color:#217346;font-weight:bold">Лист1</div>
<svg style="left:194px;top:722px" width="15" height="15" viewBox="0 0 15 15"><circle cx="7.5" cy="7.5" r="6.5" fill="none" stroke="#777" stroke-width="1"/><path d="M7.5 4V11M4 7.5H11" stroke="#555" stroke-width="1.3"/></svg>
<svg style="left:497px;top:722px" width="2" height="11" viewBox="0 0 2 11"><rect x="0" y="0" width="2" height="2" fill="#999"/><rect x="0" y="4.5" width="2" height="2" fill="#999"/><rect x="0" y="9" width="2" height="2" fill="#999"/></svg>
<div class="a" style="left:514px;top:721px;width:15px;height:15px;background:#fff;border:1px solid #ababab"></div>
<svg style="left:519px;top:725px" width="4" height="7" viewBox="0 0 4 7"><path d="M4 0V7L0 3.5Z" fill="#555"/></svg>
<div class="a" style="left:529px;top:721px;width:239px;height:15px;background:#fff;border:1px solid #ababab"></div>
<div class="a" style="left:768px;top:722px;width:24px;height:13px;background:#dadada;"></div>
<div class="a" style="left:792px;top:721px;width:15px;height:15px;background:#fff;border:1px solid #ababab"></div>
<svg style="left:798px;top:725px" width="4" height="7" viewBox="0 0 4 7"><path d="M0 0V7L4 3.5Z" fill="#555"/></svg>
<div class="a" style="left:1px;top:742px;width:827px;height:22px;background:#f1f1f1;"></div>
<div class="a" style="left:1px;top:742px;width:827px;height:1px;background:#d0d0d0;"></div>
<div class="t" style="left:9.5px;top:747.27px;font-size:11.5px;color:#444;">Готово</div>
<div class="a" style="left:525px;top:742px;width:38px;height:22px;background:#d5d5d5;"></div>
<svg style="left:537px;top:746px" width="14" height="13" viewBox="0 0 14 13"><path d="M0.5 0.5H13.5V12.5H0.5Z M0.5 4.5H13.5M0.5 8.5H13.5M4.8 0.5V12.5M9.2 0.5V12.5" fill="none" stroke="#666" stroke-width="1"/></svg>
<svg style="left:575px;top:746px" width="15" height="13" viewBox="0 0 15 13"><rect x="0.5" y="0.5" width="14" height="12" fill="none" stroke="#666" stroke-width="1"/><rect x="3.5" y="3" width="8" height="7" fill="none" stroke="#666" stroke-width="1"/><path d="M5 5H10M5 7H10" stroke="#666" stroke-width="1"/></svg>
<svg style="left:613px;top:746px" width="15" height="13" viewBox="0 0 15 13"><path d="M0.5 0.5H14.5V12.5H0.5Z M5 0.5V7.5H10V0.5" fill="none" stroke="#666" stroke-width="1"/></svg>
<div class="a" style="left:644px;top:751px;width:6px;height:2px;background:#555;"></div>
<div class="a" style="left:655px;top:752px;width:99px;height:1px;background:#999;"></div>
<div class="a" style="left:702px;top:747px;width:5px;height:11px;background:#555;"></div>
<svg style="left:758px;top:748px" width="9" height="9" viewBox="0 0 9 9"><path d="M4.5 0V9M0 4.5H9" stroke="#555" stroke-width="2"/></svg>
<div class="t" style="left:782px;top:747.03px;font-size:10.6px;color:#444;">100%</div>
<div class="a" style="left:0px;top:60px;width:1px;height:705px;background:#217346;"></div>
<div class="a" style="left:828px;top:60px;width:1px;height:705px;background:#217346;"></div>
<div class="a" style="left:0px;top:764px;width:829px;height:1px;background:#217346;"></div>
<svg style="left:0;top:0" width="829" height="765" viewBox="0 0 829 765">
<defs><filter id="sh" x="-30%" y="-30%" width="160%" height="160%"><feGaussianBlur in="SourceAlpha" stdDeviation="2.2"/><feOffset dx="1" dy="2.5"/><feComponentTransfer><feFuncA type="linear" slope="0.45"/></feComponentTransfer><feMerge><feMergeNode/><feMergeNode in="SourceGraphic"/></feMerge></filter></defs>
<g filter="url(#sh)"><polygon points="236.0,175.0 253.8,202.1 258.1,194.7 348.4,247.0 354.4,236.6 264.1,184.3 268.4,177.0" fill="#fb4147"/><polygon points="223.5,309.0 230.6,340.8 237.4,335.2 312.9,426.3 322.1,418.7 246.6,327.5 253.4,321.9" fill="#fb4147"/></g>
<g filter="url(#sh)"><circle cx="351.4" cy="241.8" r="29" fill="#0fae8d"/><circle cx="317.5" cy="422.5" r="29" fill="#0fae8d"/></g>
<text x="351.3" y="258" font-size="41.5" font-family="Liberation Sans" fill="#fff" text-anchor="middle">2</text>
<path d="M319.7 408V438" stroke="#fff" stroke-width="4.4"/><path d="M321.5 408.5L310.2 416.5V420L318 415.5Z" fill="#fff"/>
</svg>
<svg style="left:0;top:0;opacity:0.88" width="829" height="765" viewBox="0 0 829 765">
<rect x="21" y="691" width="60" height="46.5" rx="6" fill="rgba(255,255,255,0.3)" stroke="#8a8a8a" stroke-width="1.2"/>
<rect x="25.5" y="695.5" width="51.5" height="38" rx="3.5" fill="rgba(255,255,255,0.25)" stroke="#6a6a6a" stroke-width="3"/>
<rect x="40.5" y="738.5" width="19" height="4.5" rx="2" fill="#fafafa" stroke="#999" stroke-width="1"/>
<path d="M51.5 719L33 700.5" stroke="#6a6a6a" stroke-width="3.2" stroke-linecap="round"/>
<path d="M29 697.5L43.2 702.2L32.2 710.9Z" fill="#6a6a6a" stroke="#6a6a6a" stroke-width="1" stroke-linejoin="round"/>
<path d="M96.6 706.3H107.4Q111.4 706.3 111.4 710.3V720Q111.4 724 107.4 724H96.6Q92.6 724 92.6 720V710.3Q92.6 706.3 96.6 706.3Z M135.6 706.3H122.9Q119.4 706.3 119.4 709.8V711.1Q119.4 714.6 122.9 714.6H132.1Q135.6 714.6 135.6 718.1V720.5Q135.6 724 132.1 724H119.4" fill="none" stroke="#7b7b7b" stroke-width="6.6" stroke-linejoin="round" stroke-linecap="round"/>
<path d="M96.6 706.3H107.4Q111.4 706.3 111.4 710.3V720Q111.4 724 107.4 724H96.6Q92.6 724 92.6 720V710.3Q92.6 706.3 96.6 706.3Z M135.6 706.3H122.9Q119.4 706.3 119.4 709.8V711.1Q119.4 714.6 122.9 714.6H132.1Q135.6 714.6 135.6 718.1V720.5Q135.6 724 132.1 724H119.4" fill="none" stroke="#f26c83" stroke-width="4.8" stroke-linejoin="round" stroke-linecap="round"/>
<path d="M154.6 706.3V724M172.6 706.3V724M154.6 715.3H172.6 M194.7 724H184.5Q181 724 181 720.5V715.7Q181 712.2 184.5 712.2H191.2Q194.7 712.2 194.7 715.7V718.4Q194.7 720.3 192.7 720.3H181.5 M201.6 705.3V720.5Q201.6 724 205 724 M212.6 728.5V711.9H221.3Q224.8 711.9 224.8 715.4V720.5Q224.8 724 221.3 724H212.6 M243.7 724H236.8Q233.3 724 233.3 720.5V715.2Q233.3 711.7 236.8 711.7H240.2Q243.7 711.7 243.7 715.2V718.4Q243.7 720.3 241.7 720.3H233.6 M251.2 724V715.2Q251.2 711.7 254.7 711.7H264.4" fill="none" stroke="#7b7b7b" stroke-width="6.6" stroke-linejoin="round" stroke-linecap="round"/>
<path d="M154.6 706.3V724M172.6 706.3V724M154.6 715.3H172.6 M194.7 724H184.5Q181 724 181 720.5V715.7Q181 712.2 184.5 712.2H191.2Q194.7 712.2 194.7 715.7V718.4Q194.7 720.3 192.7 720.3H181.5 M201.6 705.3V720.5Q201.6 724 205 724 M212.6 728.5V711.9H221.3Q224.8 711.9 224.8 715.4V720.5Q224.8 724 221.3 724H212.6 M243.7 724H236.8Q233.3 724 233.3 720.5V715.2Q233.3 711.7 236.8 711.7H240.2Q243.7 711.7 243.7 715.2V718.4Q243.7 720.3 241.7 720.3H233.6 M251.2 724V715.2Q251.2 711.7 254.7 711.7H264.4" fill="none" stroke="#f6f6f6" stroke-width="4.8" stroke-linejoin="round" stroke-linecap="round"/>
</svg>
</body></html>
